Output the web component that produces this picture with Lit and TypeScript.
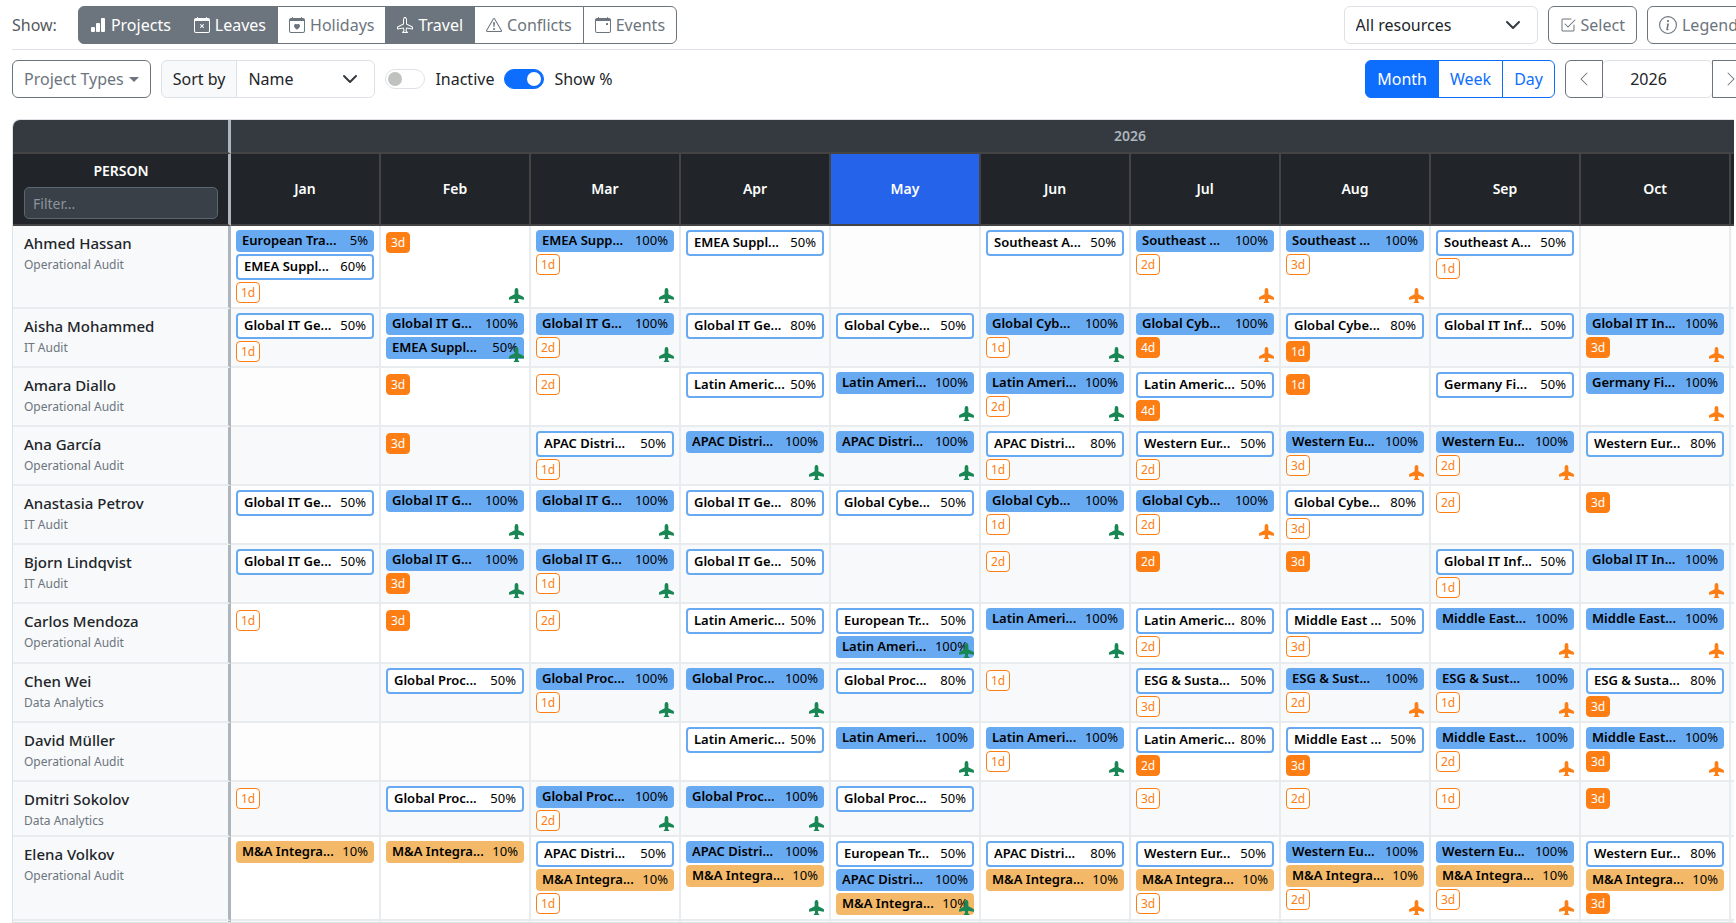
import { LitElement, html, css, svg, nothing } from 'lit';
import { customElement, property, state } from 'lit/decorators.js';
import { classMap } from 'lit/directives/class-map.js';

const CAL =
  'M3.5 0a.5.5 0 0 1 .5.5V1h8V.5a.5.5 0 0 1 1 0V1h1a2 2 0 0 1 2 2v11a2 2 0 0 1-2 2H2a2 2 0 0 1-2-2V3a2 2 0 0 1 2-2h1V.5a.5.5 0 0 1 .5-.5M1 4v10a1 1 0 0 0 1 1h12a1 1 0 0 0 1-1V4z';
const PLANE =
  'M6.428 1.151C6.708.591 7.213 0 8 0s1.292.592 1.572 1.151C9.861 1.73 10 2.431 10 3v3.691l5.17 2.585a1.5 1.5 0 0 1 .83 1.342V12a.5.5 0 0 1-.582.493l-5.507-.918-.375 2.253 1.318 1.318A.5.5 0 0 1 10.5 16h-5a.5.5 0 0 1-.354-.854l1.319-1.318-.376-2.253-5.507.918A.5.5 0 0 1 0 12v-1.382a1.5 1.5 0 0 1 .83-1.342L6 6.691V3c0-.568.14-1.271.428-1.849';

const ICONS: Record<string, string[]> = {
  bars: [
    'M1 11a1 1 0 0 1 1-1h2a1 1 0 0 1 1 1v3a1 1 0 0 1-1 1H2a1 1 0 0 1-1-1zm5-4a1 1 0 0 1 1-1h2a1 1 0 0 1 1 1v7a1 1 0 0 1-1 1H7a1 1 0 0 1-1-1zm5-5a1 1 0 0 1 1-1h2a1 1 0 0 1 1 1v12a1 1 0 0 1-1 1h-2a1 1 0 0 1-1-1z',
  ],
  leave: [
    'M6.146 7.146a.5.5 0 0 1 .708 0L8 8.293l1.146-1.147a.5.5 0 1 1 .708.708L8.707 9l1.147 1.146a.5.5 0 0 1-.708.708L8 9.707l-1.146 1.147a.5.5 0 0 1-.708-.708L7.293 9 6.146 7.854a.5.5 0 0 1 0-.708',
    CAL,
  ],
  holiday: [
    'M4 .5a.5.5 0 0 0-1 0V1H2a2 2 0 0 0-2 2v11a2 2 0 0 0 2 2h12a2 2 0 0 0 2-2V3a2 2 0 0 0-2-2h-1V.5a.5.5 0 0 0-1 0V1H4zM1 14V4h14v10a1 1 0 0 1-1 1H2a1 1 0 0 1-1-1m7-6.507c1.664-1.711 5.825 1.283 0 5.132-5.825-3.85-1.664-6.843 0-5.132',
  ],
  travel: [
    PLANE +
      'm.894.448C7.111 2.02 7 2.569 7 3v4a.5.5 0 0 1-.276.447l-5.448 2.724a.5.5 0 0 0-.276.447v.792l5.418-.903a.5.5 0 0 1 .575.41l.5 3a.5.5 0 0 1-.14.437L6.708 15h2.586l-.647-.646a.5.5 0 0 1-.14-.436l.5-3a.5.5 0 0 1 .576-.411L15 11.41v-.792a.5.5 0 0 0-.276-.447L9.276 7.447A.5.5 0 0 1 9 7V3c0-.432-.11-.979-.322-1.401C8.458 1.159 8.213 1 8 1s-.458.158-.678.599',
  ],
  plane: [PLANE],
  conflict: [
    'M7.938 2.016A.13.13 0 0 1 8.002 2a.13.13 0 0 1 .063.016.15.15 0 0 1 .054.057l6.857 11.667c.036.06.035.124.002.183a.2.2 0 0 1-.054.06.1.1 0 0 1-.066.017H1.146a.1.1 0 0 1-.066-.017.2.2 0 0 1-.054-.06.18.18 0 0 1 .002-.183L7.884 2.073a.15.15 0 0 1 .054-.057m1.044-.45a1.13 1.13 0 0 0-1.96 0L.165 13.233c-.457.778.091 1.767.98 1.767h13.713c.889 0 1.438-.99.98-1.767z',
    'M7.002 12a1 1 0 1 1 2 0 1 1 0 0 1-2 0M7.1 5.995a.905.905 0 1 1 1.8 0l-.35 3.507a.552.552 0 0 1-1.1 0z',
  ],
  event: [
    'M11 6.5a.5.5 0 0 1 .5-.5h1a.5.5 0 0 1 .5.5v1a.5.5 0 0 1-.5.5h-1a.5.5 0 0 1-.5-.5z',
    CAL,
  ],
  check: [
    'M3 14.5A1.5 1.5 0 0 1 1.5 13V3A1.5 1.5 0 0 1 3 1.5h8a.5.5 0 0 1 0 1H3a.5.5 0 0 0-.5.5v10a.5.5 0 0 0 .5.5h10a.5.5 0 0 0 .5-.5V8a.5.5 0 0 1 1 0v5a1.5 1.5 0 0 1-1.5 1.5z',
    'm8.354 10.354 7-7a.5.5 0 0 0-.708-.708L8 9.293 5.354 6.646a.5.5 0 1 0-.708.708l3 3a.5.5 0 0 0 .708 0',
  ],
  info: [
    'M8 15A7 7 0 1 1 8 1a7 7 0 0 1 0 14m0 1A8 8 0 1 0 8 0a8 8 0 0 0 0 16',
    'm8.93 6.588-2.29.287-.082.38.45.083c.294.07.352.176.288.469l-.738 3.468c-.194.897.105 1.319.808 1.319.545 0 1.178-.252 1.465-.598l.088-.416c-.2.176-.492.246-.686.246-.275 0-.375-.193-.304-.533zM9 4.5a1 1 0 1 1-2 0 1 1 0 0 1 2 0',
  ],
  prev: [
    'M11.354 1.646a.5.5 0 0 1 0 .708L5.707 8l5.647 5.646a.5.5 0 0 1-.708.708l-6-6a.5.5 0 0 1 0-.708l6-6a.5.5 0 0 1 .708 0',
  ],
  next: [
    'M4.646 1.646a.5.5 0 0 1 .708 0l6 6a.5.5 0 0 1 0 .708l-6 6a.5.5 0 0 1-.708-.708L10.293 8 4.646 2.354a.5.5 0 0 1 0-.708',
  ],
};

const icon = (name: string, cls = 'icon') => html`
  <svg class=${cls} viewBox="0 0 16 16" fill="currentColor" aria-hidden="true">
    ${ICONS[name].map((d) => svg`<path fill-rule="evenodd" d=${d}></path>`)}
  </svg>`;

const MONTHS = ['Jan', 'Feb', 'Mar', 'Apr', 'May', 'Jun', 'Jul', 'Aug', 'Sep', 'Oct', '', ''];

/*
 * Cell notation, parts separated by ";":
 *   "=Name|100"  solid bar        "-Name|50"  outlined bar      "*Name|10"  amber bar
 *   "1d"         pending leave    "!3d"       approved leave
 *   "+"          confirmed trip   "~"         planned trip      "^"         over-allocated cell
 */
interface Person {
  name: string;
  dept: string;
  cells: string[];
}

const IT_GE = '-Global IT Ge...|';
const IT_G = '=Global IT G...|100';
const IT_INF = '-Global IT Inf...|50';
const IT_IN = '=Global IT In...|100';
const CYBE = '-Global Cybe...|';
const CYB = '=Global Cyb...|100';
const LATIN = '-Latin Americ...|';
const LATI = '=Latin Ameri...|100';
const APAC = '-APAC Distri...|';
const APAC_F = '=APAC Distri...|100';
const WEST = '-Western Eur...|';
const WEST_F = '=Western Eu...|100';
const MID = '=Middle East...|100';
const PROC = '-Global Proc...|';
const PROC_F = '=Global Proc...|100';
const MA = '*M&A Integra...|10';

const PEOPLE: Person[] = [
  { name: 'Ahmed Hassan', dept: 'Operational Audit', cells: [
    '=European Tra...|5;-EMEA Suppl...|60;1d', '!3d;+', '=EMEA Supp...|100;1d;+', '-EMEA Suppl...|50', '',
    '-Southeast A...|50', '=Southeast ...|100;2d;~', '=Southeast ...|100;3d;~', '-Southeast A...|50;1d', ''] },
  { name: 'Aisha Mohammed', dept: 'IT Audit', cells: [
    `${IT_GE}50;1d`, `${IT_G};=EMEA Suppl...|50;+;^`, `${IT_G};2d;+`, `${IT_GE}80`, `${CYBE}50`,
    `${CYB};1d;+`, `${CYB};!4d;~`, `${CYBE}80;!1d`, IT_INF, `${IT_IN};!3d;~`] },
  { name: 'Amara Diallo', dept: 'Operational Audit', cells: [
    '', '!3d', '2d', `${LATIN}50`, `${LATI};+`,
    `${LATI};2d;+`, `${LATIN}50;!4d`, '!1d', '-Germany Fi...|50', '=Germany Fi...|100;~'] },
  { name: 'Ana García', dept: 'Operational Audit', cells: [
    '', '!3d', `${APAC}50;1d`, `${APAC_F};+`, `${APAC_F};+`,
    `${APAC}80;1d`, `${WEST}50;2d`, `${WEST_F};3d;~`, `${WEST_F};2d;~`, `${WEST}80`] },
  { name: 'Anastasia Petrov', dept: 'IT Audit', cells: [
    `${IT_GE}50`, `${IT_G};+`, `${IT_G};+`, `${IT_GE}80`, `${CYBE}50`,
    `${CYB};1d;+`, `${CYB};2d;~`, `${CYBE}80;3d`, '2d', '!3d'] },
  { name: 'Bjorn Lindqvist', dept: 'IT Audit', cells: [
    `${IT_GE}50`, `${IT_G};!3d;+`, `${IT_G};1d;+`, `${IT_GE}50`, '',
    '2d', '!2d', '!3d', `${IT_INF};1d`, `${IT_IN};~`] },
  { name: 'Carlos Mendoza', dept: 'Operational Audit', cells: [
    '1d', '!3d', '2d', `${LATIN}50`, `-European Tr...|50;${LATI};+`,
    `${LATI};+`, `${LATIN}80;2d`, '-Middle East ...|50;3d', `${MID};~`, `${MID};~`] },
  { name: 'Chen Wei', dept: 'Data Analytics', cells: [
    '', `${PROC}50`, `${PROC_F};1d;+`, `${PROC_F};+`, `${PROC}80`,
    '1d', '-ESG & Susta...|50;3d', '=ESG & Sust...|100;2d;~', '=ESG & Sust...|100;1d;~', '-ESG & Susta...|80;!3d'] },
  { name: 'David Müller', dept: 'Operational Audit', cells: [
    '', '', '', `${LATIN}50`, `${LATI};+`,
    `${LATI};1d;+`, `${LATIN}80;!2d`, '-Middle East ...|50;!3d', `${MID};2d;~`, `${MID};!3d;~`] },
  { name: 'Dmitri Sokolov', dept: 'Data Analytics', cells: [
    '1d', `${PROC}50`, `${PROC_F};2d;+`, `${PROC_F};+`, `${PROC}50`,
    '', '3d', '2d', '1d', '!3d'] },
  { name: 'Elena Volkov', dept: 'Operational Audit', cells: [
    MA, MA, `${APAC}50;${MA};1d`, `${APAC_F};${MA};+`, `-European Tr...|50;${APAC_F};${MA};+`,
    `${APAC}80;${MA}`, `${WEST}50;${MA};3d`, `${WEST_F};${MA};2d;~`, `${WEST_F};${MA};3d;~`, `${WEST}80;${MA};!3d`] },
  { name: '', dept: '', cells: [] },
];

@customElement('schedule-table')
export class ScheduleTable extends LitElement {
  @property({ type: Boolean }) percent = true;
  @state() private filter = '';

  static styles = css`
    :host {
      display: block;
      overflow: hidden;
      border: 1px solid #dee2e6;
      border-right: 0;
      border-radius: 8px 0 0 0;
      color: #212529;
    }
    table {
      width: max-content;
      table-layout: fixed;
      border-collapse: separate;
      border-spacing: 0;
    }
    .col-person { width: 218px; }
    .col-month { width: 150px; }
    th, td {
      box-sizing: border-box;
      padding: 0;
      border-right: 2px solid #e9ecef;
      border-bottom: 2px solid #e9ecef;
    }
    thead th {
      border-color: #444;
      color: #fff;
      background: #212529;
      font-size: 14px;
      font-weight: 600;
      line-height: 20px;
    }
    thead .band {
      height: 34px;
      background: #343a40;
      color: #adb5bd;
    }
    thead .current { background: #2563eb; }
    thead .person,
    tbody .person { border-right: 3px solid #adb5bd; }
    thead .person.head { padding: 7px 10px 5px 11px; }
    .head label {
      display: block;
      margin-bottom: 6px;
    }
    .filter {
      box-sizing: border-box;
      display: block;
      width: 100%;
      height: 32px;
      padding: 0 8px;
      border: 1px solid #5a6670;
      border-radius: 5px;
      background: #3a4047;
      color: #fff;
      font: 14px 'Noto Sans', sans-serif;
    }
    .filter::placeholder { color: #8b949c; }
    tbody .person {
      padding: 6px 10px 0 11px;
      background: #f8f9fa;
      text-align: left;
      vertical-align: top;
    }
    .name {
      display: block;
      margin-bottom: 1px;
      font-size: 15px;
      font-weight: 500;
      line-height: 22px;
    }
    .dept {
      display: block;
      color: #6c757d;
      font-size: 12px;
      font-weight: 400;
      line-height: 20px;
    }
    .slot {
      position: relative;
      padding: 4px 5px;
      background: #fff;
      vertical-align: top;
    }
    .slot.empty { background: #fdfdfd; }
    tbody tr:nth-child(even) .slot { background: #f8f9fa; }
    tbody tr:nth-child(even) .slot.over { background: #fff; }
    .bar {
      display: flex;
      box-sizing: border-box;
      height: 22px;
      margin-bottom: 2px;
      padding: 0 6px;
      border-radius: 4px;
      background: #68aaf2;
      color: #000;
      font-size: 13px;
      line-height: 21px;
      white-space: nowrap;
    }
    .bar.open {
      height: 26px;
      border: 2px solid #68aaf2;
      background: #fff;
      line-height: 21px;
    }
    .bar.amber { background: #f3b968; }
    .bar:last-child { margin-bottom: 0; }
    .title {
      flex: 1;
      overflow: hidden;
      font-weight: 600;
    }
    .leave {
      display: block;
      box-sizing: border-box;
      width: 24px;
      height: 21px;
      margin-top: 2px;
      border: 1px solid #fd7e14;
      border-radius: 4px;
      background: #fff;
      color: #fd7e14;
      font-size: 12px;
      line-height: 20px;
      text-align: center;
    }
    .leave.approved {
      background: #fd7e14;
      color: #fff;
    }
    .trip {
      position: absolute;
      right: 5px;
      bottom: 4px;
      width: 15px;
      height: 15px;
      color: #198754;
    }
    .trip.planned { color: #fd7e14; }
  `;

  private part(p: string) {
    if ('=-*'.includes(p[0])) {
      const [title, share] = p.slice(1).split('|');
      return html`<div class=${classMap({ bar: true, open: p[0] === '-', amber: p[0] === '*' })}>
        <span class="title">${title}</span>${this.percent ? html`<span>${share}%</span>` : nothing}
      </div>`;
    }
    const approved = p[0] === '!';
    return html`<span class=${classMap({ leave: true, approved })}>${approved ? p.slice(1) : p}</span>`;
  }

  private slotCell(text: string) {
    const parts = text ? text.split(';') : [];
    const body = parts.filter((p) => !'+~^'.includes(p));
    return html`<td class=${classMap({ slot: true, empty: !parts.length, over: parts.includes('^') })}>
      <div>${body.map((p) => this.part(p))}</div>
      ${parts.includes('+') ? icon('plane', 'trip') : nothing}
      ${parts.includes('~') ? icon('plane', 'trip planned') : nothing}
    </td>`;
  }

  render() {
    const rows = PEOPLE.filter((p) => p.name.toLowerCase().includes(this.filter.toLowerCase()));
    return html`<table>
      <colgroup>
        <col class="col-person" />
        ${MONTHS.map(() => html`<col class="col-month" />`)}
      </colgroup>
      <thead>
        <tr>
          <th class="band person"></th>
          <th class="band" colspan="12">2026</th>
        </tr>
        <tr>
          <th class="person head">
            <label for="filter">PERSON</label>
            <input id="filter" class="filter" placeholder="Filter..."
              @input=${(e: Event) => (this.filter = (e.target as HTMLInputElement).value)} />
          </th>
          ${MONTHS.map((m) => html`<th class=${classMap({ current: m === 'May' })}>${m}</th>`)}
        </tr>
      </thead>
      <tbody>
        ${rows.map((p) => html`<tr>
          <th class="person" scope="row">
            <span class="name">${p.name}</span><span class="dept">${p.dept}</span>
          </th>
          ${MONTHS.map((_, i) => this.slotCell(p.cells[i] ?? ''))}
        </tr>`)}
      </tbody>
    </table>`;
  }
}

@customElement('app-root')
export class AppRoot extends LitElement {
  @state() private layers = new Set(['Projects', 'Leaves', 'Travel']);
  @state() private scale = 'Month';
  @state() private showPercent = true;

  static styles = css`
    :host {
      display: flex;
      flex-direction: column;
      height: 100vh;
      box-sizing: border-box;
      padding: 6px 0 0 12px;
      overflow: hidden;
      background: #fff;
      color: #212529;
      font-family: 'Noto Sans', 'Open Sans', sans-serif;
      font-size: 16px;
      line-height: 24px;
    }
    .toolbar {
      display: flex;
      flex: none;
      align-items: center;
      gap: 10px;
      margin-right: -14px;
      white-space: nowrap;
    }
    .primary {
      padding-bottom: 5px;
      border-bottom: 1px solid #dee2e6;
      margin-bottom: 10px;
    }
    .spacer { flex: 1; }
    .show {
      margin-right: 11px;
      color: #55595e;
    }
    .group { display: flex; }
    .group > * { border-radius: 0; }
    .group > * + * { margin-left: -1px; }
    .group > :first-child { border-radius: 6px 0 0 6px; }
    .group > :last-child { border-radius: 0 6px 6px 0; }
    button, select, .year, .addon {
      box-sizing: border-box;
      height: 38px;
      border: 1px solid #dee2e6;
      border-radius: 6px;
      background: #fff;
      color: #212529;
      font: inherit;
    }
    button {
      display: inline-flex;
      align-items: center;
      gap: 5px;
      padding: 0 11px;
      border-color: #6c757d;
      color: #6c757d;
    }
    .on {
      background: #6c757d;
      color: #fff;
    }
    .scale button {
      border-color: #0d6efd;
      color: #0d6efd;
    }
    .scale .on {
      background: #0d6efd;
      color: #fff;
    }
    .icon {
      width: 16px;
      height: 16px;
      flex: none;
    }
    .icon-lg {
      width: 18px;
      height: 18px;
      flex: none;
    }
    .caret {
      border: 5px solid transparent;
      border-top-color: currentColor;
      border-bottom: 0;
    }
    .addon {
      display: flex;
      align-items: center;
      padding: 0 11px;
      background: #f8f9fa;
    }
    select {
      appearance: none;
      width: 194px;
      padding: 0 40px 0 11px;
      background: #fff url("data:image/svg+xml,%3Csvg xmlns='http://www.w3.org/2000/svg' viewBox='0 0 16 16'%3E%3Cpath fill='none' stroke='%23343a40' stroke-linecap='round' stroke-linejoin='round' stroke-width='2' d='m2 5 6 6 6-6'/%3E%3C/svg%3E") no-repeat right 16px center / 16px 16px;
    }
    .sort select { width: 139px; }
    .switch {
      display: flex;
      align-items: center;
      gap: 10px;
    }
    .switch input {
      appearance: none;
      box-sizing: border-box;
      width: 40px;
      height: 20px;
      margin: 0;
      padding: 2px;
      border: 1px solid #dee2e6;
      border-radius: 10px;
      display: flex;
      background: #fff;
    }
    .switch input::before {
      content: '';
      width: 14px;
      height: 14px;
      border-radius: 50%;
      background: #bfc2bf;
    }
    .switch input:checked {
      justify-content: flex-end;
      border-color: #0d6efd;
      background: #0d6efd;
    }
    .switch input:checked::before { background: #fff; }
    .stepper button {
      position: relative;
      z-index: 1;
      padding: 0 10px;
    }
    .year {
      width: 111px;
      padding: 0 28px 0 10px;
      text-align: center;
    }
    schedule-table {
      flex: 1;
      min-height: 0;
      margin: 21px 2px 0 0;
    }
  `;

  private toggle(name: string) {
    const next = new Set(this.layers);
    if (!next.delete(name)) next.add(name);
    this.layers = next;
  }

  render() {
    const layers = [
      ['Projects', 'bars'], ['Leaves', 'leave'], ['Holidays', 'holiday'],
      ['Travel', 'travel'], ['Conflicts', 'conflict'], ['Events', 'event'],
    ];
    return html`
      <div class="toolbar primary">
        <span class="show">Show:</span>
        <div class="group">
          ${layers.map(([name, ic]) => html`<button class=${classMap({ on: this.layers.has(name) })}
            aria-pressed=${this.layers.has(name)} @click=${() => this.toggle(name)}>${icon(ic)}${name}</button>`)}
        </div>
        <span class="spacer"></span>
        <select aria-label="Resources"><option>All resources</option></select>
        <button>${icon('check')}Select</button>
        <button>${icon('info', 'icon-lg')}Legend</button>
      </div>
      <div class="toolbar">
        <button>Project Types<span class="caret"></span></button>
        <div class="group sort">
          <label class="addon" for="sort">Sort by</label>
          <select id="sort"><option>Name</option></select>
        </div>
        <label class="switch"><input type="checkbox" role="switch" />Inactive</label>
        <label class="switch"><input type="checkbox" role="switch" .checked=${this.showPercent}
          @change=${(e: Event) => (this.showPercent = (e.target as HTMLInputElement).checked)} />Show %</label>
        <span class="spacer"></span>
        <div class="group scale">
          ${['Month', 'Week', 'Day'].map((s) => html`<button class=${classMap({ on: this.scale === s })}
            @click=${() => (this.scale = s)}>${s}</button>`)}
        </div>
        <div class="group stepper">
          <button aria-label="Previous year">${icon('prev')}</button>
          <input class="year" aria-label="Year" value="2026" />
          <button aria-label="Next year">${icon('next')}</button>
        </div>
      </div>
      <schedule-table .percent=${this.showPercent}></schedule-table>
    `;
  }
}
